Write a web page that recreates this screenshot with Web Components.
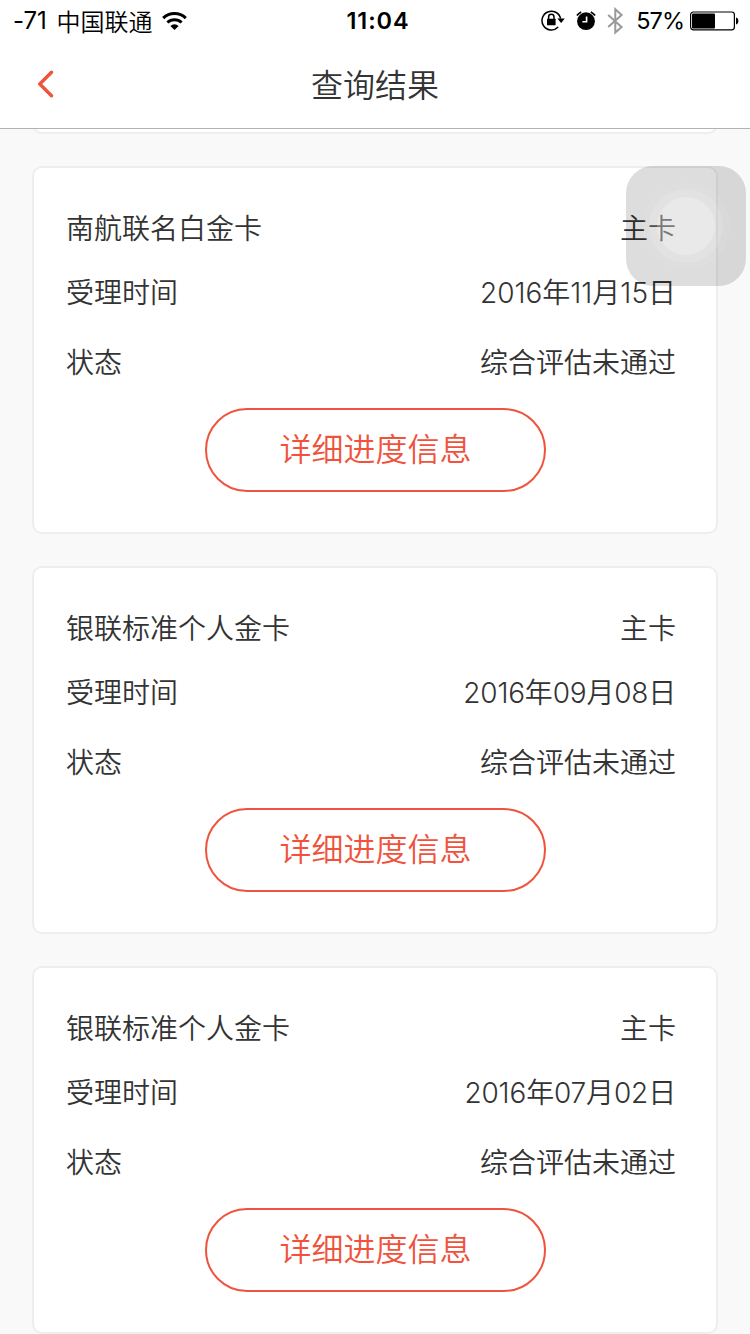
<!DOCTYPE html>
<html lang="zh-CN">
<head>
<meta charset="utf-8">
<title>查询结果</title>
<style>
    html, body {
        margin: 0;
        height: 1334px;
        overflow: hidden;
    }
    body {
        font-family: Inter, "Noto Sans CJK SC", sans-serif;
        color: #333;
        background: #f9f9f9;
    }
</style>
</head>
<body>
<query-page>
    <status-bar slot="top" carrier="中国联通" signal="-71" time="11:04" battery="57%"></status-bar>
    <nav-header slot="top">查询结果</nav-header>
    <result-card></result-card>
    <result-card name="南航联名白金卡" kind="主卡" date="2016年11月15日" state="综合评估未通过" style="--date-spacing: 0px"></result-card>
    <result-card name="银联标准个人金卡" kind="主卡" date="2016年09月08日" state="综合评估未通过"></result-card>
    <result-card name="银联标准个人金卡" kind="主卡" date="2016年07月02日" state="综合评估未通过" style="--date-spacing: -0.15px"></result-card>
    <assistive-touch slot="overlay"></assistive-touch>
</query-page>

<script>
class QueryPage extends HTMLElement {
    constructor() {
        super();
        this.attachShadow({ mode: "open" });
        this.shadowRoot.innerHTML = `
            <style>
                :host {
                    display: flex;
                    flex-direction: column;
                    position: relative;
                    width: 750px;
                    height: 1334px;
                    overflow: hidden;
                }
                .list {
                    flex: 1;
                    min-height: 0;
                    overflow: hidden;
                    display: flex;
                    flex-direction: column;
                    justify-content: flex-end;
                    gap: 32px;
                    padding: 0 32px;
                }
            </style>
            <slot name="top"></slot>
            <div class="list"><slot></slot></div>
            <slot name="overlay"></slot>
        `;
    }
}

class StatusBar extends HTMLElement {
    constructor() {
        super();
        this.attachShadow({ mode: "open" });
        this._render();
    }

    _render() {
        this.shadowRoot.innerHTML = `
            <style>
                :host {
                    flex: none;
                    display: grid;
                    grid-template-columns: 1fr auto 1fr;
                    align-items: center;
                    height: 40px;
                    padding: 0 11px 0 13px;
                    background: #fff;
                    color: #000;
                    font-size: 24px;
                    line-height: 42px;
                }
                .left, .right {
                    display: flex;
                    align-items: center;
                    height: 40px;
                }
                .right {
                    justify-content: flex-end;
                }
                .signal {
                    letter-spacing: -0.1px;
                    margin-right: 10px;
                }
                .carrier {
                    font-family: "Noto Sans CJK TC", sans-serif;
                    line-height: 40px;
                    padding-bottom: 1px;
                    font-weight: 350;
                }
                .time {
                    font-weight: 600;
                    font-size: 23.5px;
                    letter-spacing: 0.9px;
                    padding-left: 4px;
                }
                .percent {
                    font-size: 23.5px;
                    letter-spacing: -1px;
                    margin: 0 6px 0 12px;
                }
                svg {
                    display: block;
                    flex: none;
                }
                .wifi { margin-left: 9px; }
                .alarm { margin-left: 11px; }
                .bluetooth { margin-left: 11px; }
            </style>
            <div class="left">
                <span class="signal">${this.getAttribute("signal")}</span>
                <span class="carrier">${this.getAttribute("carrier")}</span>
                <svg class="wifi" width="25" height="19" viewBox="0 0 25 19">
                    <g fill="none" stroke="#000" stroke-width="3">
                        <path d="M1.2 6.1a16.2 16.2 0 0 1 22.6 0"/>
                        <path d="M5.4 10.5a10.4 10.4 0 0 1 14.2 0"/>
                    </g>
                    <path d="M12.5 18l-4.1-4.1a6 6 0 0 1 8.2 0z"/>
                </svg>
            </div>
            <span class="time">${this.getAttribute("time")}</span>
            <div class="right">
                <svg width="24" height="22" viewBox="0 0 24 22">
                    <path d="M17.2 17.1A9.4 9.4 0 1 1 19.6 8.7" fill="none" stroke="#000" stroke-width="1.5"/>
                    <path d="M16.4 8.4h7.4l-3.7 4.6z"/>
                    <rect x="6" y="8.7" width="8.6" height="6.6" rx=".6"/>
                    <path d="M7.6 9.1V7a2.7 2.7 0 0 1 5.4 0v2.1" fill="none" stroke="#000" stroke-width="1.5"/>
                </svg>
                <svg class="alarm" width="20" height="20" viewBox="0 0 20 20">
                    <circle cx="10" cy="10.2" r="8.9"/>
                    <path d="M.9 4.5A11 11 0 0 1 5.2.9M19.1 4.5A11 11 0 0 0 14.8.9" fill="none" stroke="#000" stroke-width="1.7"/>
                    <path d="M10.6 5.4v5.3H6.4" fill="none" stroke="#fff" stroke-width="1.6"/>
                </svg>
                <svg class="bluetooth" width="17" height="28" viewBox="0 0 17 28">
                    <path d="M1.2 7.9l13.4 12-6.3 5.7V2.2l6.3 5.7-13.4 12" fill="none" stroke="#999" stroke-width="2"/>
                </svg>
                <span class="percent">${this.getAttribute("battery")}</span>
                <svg width="49" height="20" viewBox="0 0 49 20">
                    <rect x=".6" y="1" width="43.8" height="17.8" rx="2.8" fill="none" stroke="#000" stroke-width="1.2"/>
                    <rect x="2" y="2.4" width="23" height="15" rx="1"/>
                    <path d="M46 6.4c3.2.6 3.2 6.4 0 7z"/>
                </svg>
            </div>
        `;
    }
}

class NavHeader extends HTMLElement {
    constructor() {
        super();
        this.attachShadow({ mode: "open" });
        this.shadowRoot.innerHTML = `
            <style>
                :host {
                    flex: none;
                    display: grid;
                    grid-template-columns: 1fr auto 1fr;
                    align-items: center;
                    height: 88px;
                    padding: 0 36px;
                    background: #fff;
                    border-bottom: 1px solid #b2b2b2;
                    font-size: 32px;
                    font-weight: 350;
                }
                svg {
                    display: block;
                }
                .title {
                    line-height: 84px;
                    padding-top: 4px;
                }
            </style>
            <svg width="20" height="28" viewBox="0 0 20 28">
                <path d="M15.5 2.3L3.8 14l11.7 11.7" fill="none" stroke="#f0533d" stroke-width="3.4" stroke-linecap="round" stroke-linejoin="round"/>
            </svg>
            <div class="title"><slot></slot></div>
        `;
    }
}

class ResultCard extends HTMLElement {
    constructor() {
        super();
        this.attachShadow({ mode: "open" });
        this._render();
    }

    _render() {
        this.shadowRoot.innerHTML = `
            <style>
                :host {
                    flex: none;
                    display: flex;
                    flex-direction: column;
                    box-sizing: border-box;
                    height: 368px;
                    padding: 26px 40px 0 32px;
                    border: 2px solid #eee;
                    border-radius: 10px;
                    background: #fff;
                    font-size: 28px;
                    font-weight: 350;
                }
                .row {
                    display: flex;
                    justify-content: space-between;
                    height: 70px;
                    line-height: 70px;
                }
                .row.head {
                    height: 64px;
                }
                .date {
                    letter-spacing: var(--date-spacing, -0.2px);
                }
            </style>
            ${this.hasAttribute("name") ? this._content() : ""}
        `;
    }

    _content() {
        return `
            <div class="row head"><span>${this.getAttribute("name")}</span><span>${this.getAttribute("kind")}</span></div>
            <div class="row"><span>受理时间</span><span class="date">${this.getAttribute("date")}</span></div>
            <div class="row"><span>状态</span><span>${this.getAttribute("state")}</span></div>
            <pill-button>详细进度信息</pill-button>
        `;
    }
}

class PillButton extends HTMLElement {
    constructor() {
        super();
        this.attachShadow({ mode: "open" });
        this.shadowRoot.innerHTML = `
            <style>
                :host {
                    display: block;
                    box-sizing: border-box;
                    width: 341px;
                    height: 84px;
                    margin: 10px 0 0 139px;
                    border: 2px solid #f0533d;
                    border-radius: 42px;
                    color: #f0533d;
                    font-size: 32px;
                    line-height: 80px;
                    text-align: center;
                    cursor: pointer;
                }
            </style>
            <slot></slot>
        `;
    }
}

class AssistiveTouch extends HTMLElement {
    constructor() {
        super();
        this.attachShadow({ mode: "open" });
        this.shadowRoot.innerHTML = `
            <style>
                :host {
                    position: absolute;
                    left: 626px;
                    top: 166px;
                    width: 120px;
                    height: 120px;
                    border-radius: 27px;
                    background: rgba(0, 0, 0, 0.135);
                }
                svg {
                    display: block;
                }
            </style>
            <svg width="120" height="120" viewBox="0 0 120 120" fill="#fff">
                <circle cx="60" cy="60" r="44" fill-opacity=".05"/>
                <circle cx="60" cy="60" r="37" fill-opacity=".12"/>
                <circle cx="60" cy="60" r="29" fill-opacity=".25"/>
            </svg>
        `;
    }
}

customElements.define("query-page", QueryPage);
customElements.define("status-bar", StatusBar);
customElements.define("nav-header", NavHeader);
customElements.define("pill-button", PillButton);
customElements.define("result-card", ResultCard);
customElements.define("assistive-touch", AssistiveTouch);
</script>
</body>
</html>
